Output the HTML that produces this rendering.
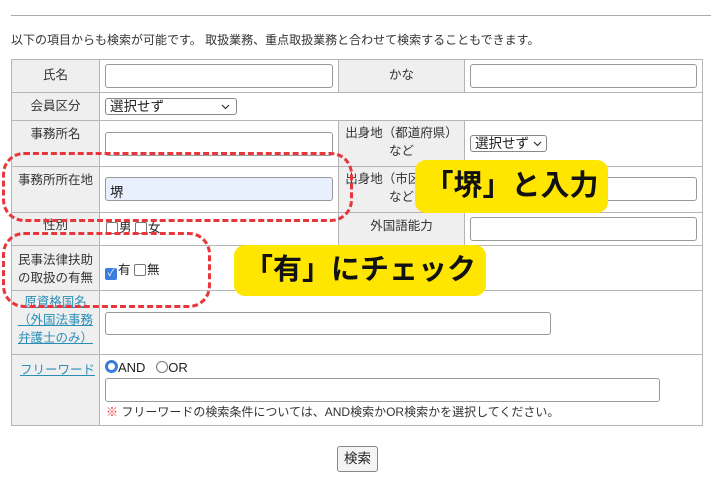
<!DOCTYPE html>
<html><head><meta charset="utf-8"><style>
*{margin:0;padding:0;box-sizing:border-box}
body{width:720px;height:480px;background:#fff;position:relative;overflow:hidden;font-family:"Liberation Sans","Noto Sans CJK JP",sans-serif;font-size:12.5px;color:#222}
.a{position:absolute}
.l{position:absolute;background:#efefef;border:1px solid #b5b5b5;text-align:center;color:#333;line-height:18px}
.c{position:absolute;background:#fff;border:1px solid #b5b5b5}
.in{position:absolute;border:1px solid #999;border-radius:3px;background:#fff}
.sel{position:absolute;border:1px solid #888;border-radius:3px;background:#fff;font-size:13.5px;padding-left:4px;line-height:15px}
.sel svg{position:absolute;top:5px}
.lnk{color:#2a8fb8;text-decoration:underline}
.cb{display:inline-block;width:12px;height:12px;border:1px solid #777;border-radius:2px;vertical-align:-2px;background:#fff;margin-right:1px}
.y{position:absolute;background:#ffe600;border-radius:11px;font-weight:bold;color:#111;text-align:center}
.d{position:absolute;border:3px dashed #e8373c;border-radius:22px}
</style></head><body>
<div class="a" style="left:11px;top:15px;width:700px;height:1px;background:#aaa"></div>
<div class="a" style="left:11px;top:31px;font-size:12px;color:#333">以下の項目からも検索が可能です。 取扱業務、重点取扱業務と合わせて検索することもできます。</div>

<div class="l" style="left:11px;top:59px;width:89px;height:34px;padding-top:6px">氏名</div>
<div class="c" style="left:99px;top:59px;width:240px;height:34px"></div>
<div class="l" style="left:338px;top:59px;width:127px;height:34px;padding-top:6px">かな</div>
<div class="c" style="left:464px;top:59px;width:239px;height:34px"></div>
<div class="in" style="left:105px;top:64px;width:228px;height:24px"></div>
<div class="in" style="left:470px;top:64px;width:227px;height:24px"></div>

<div class="l" style="left:11px;top:92px;width:89px;height:29px;padding-top:4px">会員区分</div>
<div class="c" style="left:99px;top:92px;width:604px;height:29px"></div>
<div class="sel" style="left:105px;top:98px;width:132px;height:17px">選択せず<svg style="right:6px" width="9" height="6" viewBox="0 0 9 6"><path d="M1 1 L4.5 4.5 L8 1" fill="none" stroke="#333" stroke-width="1.2"/></svg></div>

<div class="l" style="left:11px;top:120px;width:89px;height:47px;padding-top:4px">事務所名</div>
<div class="c" style="left:99px;top:120px;width:240px;height:47px"></div>
<div class="l" style="left:338px;top:120px;width:127px;height:47px;padding-top:3px">出身地（都道府県）<br>など</div>
<div class="c" style="left:464px;top:120px;width:239px;height:47px"></div>
<div class="in" style="left:105px;top:132px;width:228px;height:24px"></div>
<div class="sel" style="left:470px;top:135px;width:77px;height:17px">選択せず<svg style="right:4px" width="9" height="6" viewBox="0 0 9 6"><path d="M1 1 L4.5 4.5 L8 1" fill="none" stroke="#333" stroke-width="1.2"/></svg></div>

<div class="l" style="left:11px;top:166px;width:89px;height:47px;padding-top:4px">事務所所在地</div>
<div class="c" style="left:99px;top:166px;width:240px;height:47px"></div>
<div class="l" style="left:338px;top:166px;width:127px;height:47px;padding-top:3px">出身地（市区町村）<br>など</div>
<div class="c" style="left:464px;top:166px;width:239px;height:47px"></div>
<div class="in" style="left:105px;top:177px;width:228px;height:24px;background:#e8f0fe;font-size:13.5px;padding:3px 0 0 4px">堺</div>
<div class="in" style="left:470px;top:177px;width:227px;height:24px"></div>

<div class="l" style="left:11px;top:212px;width:89px;height:34px;padding-top:3px">性別</div>
<div class="c" style="left:99px;top:212px;width:240px;height:34px;padding:4px 0 0 6px"><span class="cb"></span>男 <span class="cb"></span>女</div>
<div class="l" style="left:338px;top:212px;width:127px;height:34px;padding-top:4px">外国語能力</div>
<div class="c" style="left:464px;top:212px;width:239px;height:34px"></div>
<div class="in" style="left:470px;top:217px;width:227px;height:24px"></div>

<div class="l" style="left:11px;top:245px;width:89px;height:46px;padding-top:5px">民事法律扶助<br>の取扱の有無</div>
<div class="c" style="left:99px;top:245px;width:604px;height:46px;padding:13px 0 0 5px"><span class="cb" style="background:#3b7ddd;border-color:#3b7ddd;color:#fff;font-size:10px;line-height:10px;text-align:center">✓</span>有 <span class="cb"></span>無</div>

<div class="l" style="left:11px;top:290px;width:89px;height:65px;padding-top:2px"><span class="lnk">原資格国名<br>（外国法事務<br>弁護士のみ）</span></div>
<div class="c" style="left:99px;top:290px;width:604px;height:65px"></div>
<div class="in" style="left:105px;top:312px;width:446px;height:23px"></div>

<div class="l" style="left:11px;top:354px;width:89px;height:72px;padding-top:6px;text-align:left;padding-left:8px"><span class="lnk">フリーワード</span></div>
<div class="c" style="left:99px;top:354px;width:604px;height:72px"></div>
<div class="a" style="left:105px;top:360px;font-size:13px"><span style="display:inline-block;width:13px;height:13px;border-radius:50%;border:3px solid #3b7ddd;background:#fff;vertical-align:-1px"></span>AND&nbsp;&nbsp; <span style="display:inline-block;width:12px;height:12px;border-radius:50%;border:1px solid #777;vertical-align:-1px"></span>OR</div>
<div class="in" style="left:105px;top:378px;width:555px;height:24px"></div>
<div class="a" style="left:106px;top:403px;font-size:12px;color:#333"><span style="color:#e33">※</span> フリーワードの検索条件については、AND検索かOR検索かを選択してください。</div>

<div class="a" style="left:337px;top:446px;width:41px;height:26px;border:1px solid #888;border-radius:3px;background:#f4f4f4;font-size:13.5px;text-align:center;line-height:24px">検索</div>

<div class="d" style="left:2px;top:152px;width:351px;height:70px"></div>
<div class="d" style="left:2px;top:232px;width:209px;height:76px"></div>
<div class="y" style="left:415px;top:160px;width:193px;height:53px;font-size:29px;line-height:53px">「堺」と入力</div>
<div class="y" style="left:234px;top:245px;width:252px;height:51px;font-size:29px;line-height:51px">「有」にチェック</div>
</body></html>
